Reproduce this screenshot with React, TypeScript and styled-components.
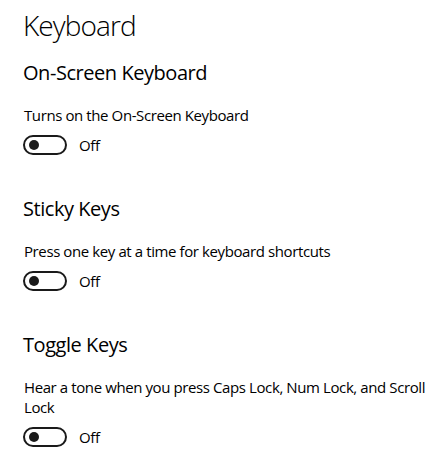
import React from "react";
import styled, { createGlobalStyle } from "styled-components";

const Global = createGlobalStyle`
  html, body { margin: 0; padding: 0; background: #fff; }
  body { font-family: "Segoe UI", "Open Sans", "Noto Sans", sans-serif; color: #000; }
`;

const Page = styled.div`
  padding: 7px 0 0 24px;
  display: flex;
  flex-direction: column;
`;

const Title = styled.h1`
  margin: 0 0 16px -1px;
  font-size: 28px;
  line-height: 36px;
  font-weight: 300;
  letter-spacing: -0.9px;
`;

const Section = styled.section`
  display: flex;
  flex-direction: column;
  margin-bottom: 40px;
`;

const Heading = styled.h2`
  margin: 0 0 18px -1px;
  font-size: 20px;
  line-height: 28px;
  font-weight: 400;
  letter-spacing: -0.45px;
`;

const Description = styled.p`
  margin: 0 0 10px;
  font-size: 15px;
  line-height: 20px;
  letter-spacing: -0.4px;
  width: 404px;
`;

const ToggleRow = styled.div`
  display: flex;
  align-items: center;
  gap: 12px;
  height: 20px;
  margin-left: -1px;
`;

const Track = styled.div`
  box-sizing: border-box;
  width: 44px;
  height: 20px;
  border: 2px solid #1a1a1a;
  border-radius: 10px;
  display: flex;
  align-items: center;
  padding-left: 4px;
`;

const Knob = styled.div`
  width: 10px;
  height: 10px;
  border-radius: 50%;
  background: #1a1a1a;
`;

const State = styled.span`
  font-size: 15px;
  line-height: 20px;
  letter-spacing: -0.4px;
`;

const sections = [
  { title: "On-Screen Keyboard", desc: "Turns on the On-Screen Keyboard" },
  { title: "Sticky Keys", desc: "Press one key at a time for keyboard shortcuts" },
  {
    title: "Toggle Keys",
    desc: "Hear a tone when you press Caps Lock, Num Lock, and Scroll Lock",
  },
];

export default function App() {
  return (
    <>
      <Global />
      <Page>
        <Title>Keyboard</Title>
        {sections.map((s) => (
          <Section key={s.title}>
            <Heading>{s.title}</Heading>
            <Description>{s.desc}</Description>
            <ToggleRow>
              <Track>
                <Knob />
              </Track>
              <State>Off</State>
            </ToggleRow>
          </Section>
        ))}
      </Page>
    </>
  );
}
